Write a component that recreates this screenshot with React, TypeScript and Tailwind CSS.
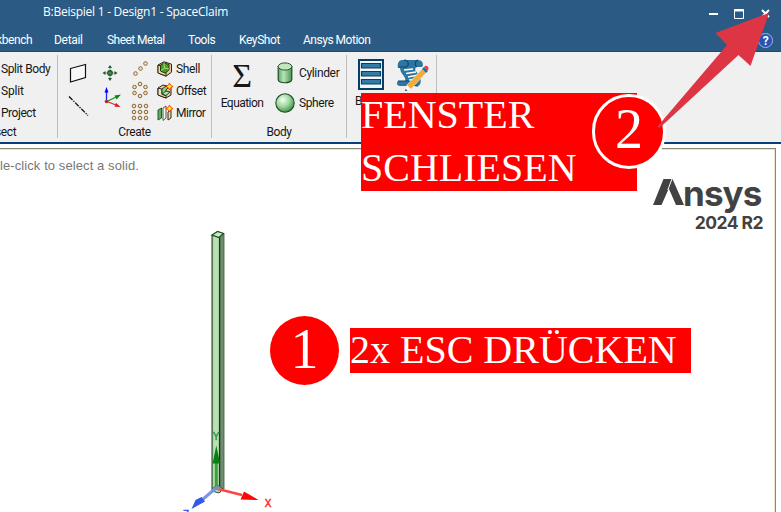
import type { ReactNode } from 'react';

function Tab({ children, className }: { children: ReactNode; className: string }) {
  return <div className={`shrink-0 whitespace-nowrap ${className}`}>{children}</div>;
}

function GroupLabel({ children }: { children: ReactNode }) {
  return <div className="h-[20px] text-center leading-[20px]">{children}</div>;
}

function PlaneIcon() {
  return (
    <svg width="22" height="22" viewBox="0 0 22 22">
      <path d="M3.5 6.5 18.5 2.5V15.5L3.5 20Z" fill="#f8f8f8" stroke="#111" strokeWidth="1.2" />
    </svg>
  );
}

function LineIcon() {
  return (
    <svg width="22" height="22" viewBox="0 0 22 22">
      <path d="M2 2.500 21 21.500" stroke="#111" strokeWidth="1.3" strokeDasharray="5 1.2 1.3 1.2" />
    </svg>
  );
}

function PointIcon() {
  return (
    <svg width="18" height="18" viewBox="0 0 18 18">
      <g fill="#1d5a2a">
        <path d="M9 1 11 4H7ZM9 17 7 14h4ZM1.500 9 4.500 7v4ZM16.500 9 13.500 7v4Z" />
        <path d="M4 8.500h10v1H4ZM8.500 4h1v10h-1Z" opacity=".55" />
        <circle cx="9" cy="9" r="2.900" />
      </g>
      <circle cx="9" cy="9" r="1.600" fill="#4d8a50" />
    </svg>
  );
}

function OriginIcon() {
  return (
    <svg width="20" height="22" viewBox="0 0 20 22">
      <path d="M4.500 14.500V4" stroke="#2222ff" strokeWidth="1.300" />
      <path d="M4.500 0 6.500 5.500h-4Z" fill="#00f" />
      <path d="M5 14.500 14 10" stroke="#169516" strokeWidth="1.300" />
      <path d="M19 7.500 14.500 12.500 12.500 8.500Z" fill="#078807" />
      <path d="m5 14.500 9 3.500" stroke="#d42a32" strokeWidth="1.300" />
      <path d="m18.500 20-6-.3 1.500-4Z" fill="#dc2028" />
      <circle cx="4.500" cy="14.500" r="1.800" fill="#bd2522" />
    </svg>
  );
}

function Rings({ points }: { points: number[][] }) {
  return (
    <svg width="18" height="18" viewBox="0 0 18 18">
      {points.map(([x, y]) => (
        <circle key={`${x}-${y}`} cx={x} cy={y} r="1.800" fill="#f8e8b3" stroke="#85633e" strokeWidth="1" />
      ))}
    </svg>
  );
}

function Spark() {
  return <path d="m12.500 0 1.200 2.300L16 3.500l-2.300 1.200L12.500 7l-1.200-2.300L9 3.500l2.300-1.200Z" fill="#ffed24" stroke="#f33a10" strokeWidth=".9" />;
}

function ShellIcon() {
  return (
    <svg width="16" height="16" viewBox="0 0 16 16">
      <path d="M1 4 7 .8 14.500 3.200v8L9 15.200 1 12Z" fill="#f2c899" stroke="#24291c" />
      <path d="m1 4 8 2.500v8.500L1 12Z" fill="#f0d9a6" stroke="#2c2a18" />
      <path d="m3.500 4 3.500-2L12 3.500v5.500l-4 3.200L3.500 10Z" fill="#4d9c22" stroke="#213b16" />
      <path d="m7 2 .5 5L4 9.500M7.500 7l4.500 1" stroke="#b1d980" fill="none" />
    </svg>
  );
}

function OffsetIcon() {
  return (
    <svg width="16" height="16" viewBox="0 0 16 16">
      <path d="m1 5 5-3 8 2v8l-5 3-8-3Z" fill="#f2ca99" stroke="#26251e" />
      <path d="m1 5 4 1.200v5.300l4 1V15l-8-3Z" fill="#f5dfb4" stroke="#26251e" />
      <path d="m5 6 4-3 3 1-3 3v3l-4 1Z" fill="#8fcb88" stroke="#1e4222" />
      <path d="m5 11 4-3 4 1-4 3.500Z" fill="#b7dfae" stroke="#1e4222" />
      <Spark />
    </svg>
  );
}

function MirrorIcon() {
  return (
    <svg width="16" height="16" viewBox="0 0 16 16">
      <path d="m1 5 3.500-2v10L1 15Z" fill="#5cae58" stroke="#25582b" />
      <path d="m6 3 3-2v12l-3 2.500Z" fill="#f7faf3" stroke="#55564e" />
      <path d="m11 7 3-2v8l-3 2Z" fill="#f7d99e" stroke="#302b1e" />
      <Spark />
    </svg>
  );
}

function CylinderIcon() {
  return (
    <svg width="16" height="22" viewBox="0 0 16 22">
      <defs>
        <linearGradient id="cylinder"><stop stopColor="#58ab64" /><stop offset=".4" stopColor="#b9e3b8" /><stop offset="1" stopColor="#479652" /></linearGradient>
      </defs>
      <path d="M1.200 4.500v13c0 4.300 13.600 4.300 13.600 0v-13Z" fill="url(#cylinder)" stroke="#244c29" strokeWidth="1.200" />
      <ellipse cx="8" cy="4.500" rx="6.800" ry="3.600" fill="#c1e7bd" stroke="#285630" />
    </svg>
  );
}

function SphereIcon() {
  return (
    <svg width="20" height="20" viewBox="0 0 20 20">
      <defs>
        <radialGradient id="sphere" cx=".38" cy=".33" r=".75"><stop stopColor="#f4fdf3" /><stop offset=".5" stopColor="#9bd79b" /><stop offset="1" stopColor="#33803c" /></radialGradient>
      </defs>
      <circle cx="10" cy="10" r="9.200" fill="url(#sphere)" stroke="#244f2a" strokeWidth="1.100" />
    </svg>
  );
}

function BlockIcon() {
  return (
    <svg width="26" height="31" viewBox="0 0 26 31">
      <path d="M1 1h24v29H1Z" fill="#f4f7f8" stroke="#043e69" strokeWidth="2" />
      {[4.5, 12.5, 20.5].map((y) => <path key={y} d={`M3.500 ${y}h19v4.500h-19Z`} fill="#317ba5" stroke="#063e67" strokeWidth="1.200" />)}
    </svg>
  );
}

function ScriptIcon() {
  return (
    <svg width="33" height="33" viewBox="0 0 33 33">
      <path d="M6 1h16c5 0 6 5 4 7h-6l-1 3 4 5c3 5 2 10-1 11H4c-3 0-4-3-2-5h7c2-4-5-7-5-13h-2c-1-5 1-8 4-8Z" fill="#2d76a2" />
      <path d="M8 1c5 0 6 7 1 7H3M22 1c-4 1-3 6-1 7M2 22h14c0 4 3 5 6 5" fill="none" stroke="#0a466e" strokeWidth="1.100" />
      <path d="m8 11 9-1M10 14.500 20 13M12 18l10-2M13 21l7-1" stroke="#fff" strokeWidth="1.400" />
      <path d="m26 10 4 4-15 16-6 2 2-6Z" fill="#f2ac37" stroke="#eee" strokeWidth=".6" />
      <path d="m26 10 2-2 4 4-2 2Z" fill="#0876b8" />
      <path d="m28 8 1-1c2-1 4 1 3.500 3L31 12Z" fill="#ed3f4c" />
      <path d="m11 26 4 4-6 2Z" fill="#fff" />
      <path d="m9 32 .8-2.100 1.500 1.500Z" fill="#222" />
    </svg>
  );
}

function Model() {
  return (
    <svg className="absolute left-[175px] top-[225px]" width="105" height="287" viewBox="175 225 105 287">
      <path d="m212 235 6-4 6 2.500V489l-5 4-7-2Z" fill="#b9e2b4" />
      <path d="m219 237 5-3.500V489l-5 4Z" fill="#708c71" />
      <path d="M212.200 235v256" stroke="#587c58" strokeWidth="1.800" />
      <path d="M219.600 237v256" stroke="#153b1b" strokeWidth="1.400" />
      <path d="M223.800 234v255" stroke="#58785a" strokeWidth="1.400" />
      <path d="m212 235 5.500-3.500 6 2-4.500 4Z" fill="#bdf0bd" stroke="#234b29" strokeWidth="1.300" />
      <path d="m212 489 5-4 6 4-4 4-7-2" fill="#b4dfb5" stroke="#315535" />
      <path d="M216.300 489v-27" stroke="#38a33a" strokeWidth="3" />
      <path d="m216.300 445.500 3.800 18h-7.500Z" fill="#087e13" />
      <path d="m218 489 24 6" stroke="#ff4540" strokeWidth="2.800" />
      <path d="m258.500 500-18-.5 3.500-8Z" fill="#ff0505" />
      <path d="m216 488-14 12" stroke="#7795e8" strokeWidth="3" />
      <path d="m191.500 509 4-9 6-3 3.500 4.500Z" fill="#315ae7" />
      <path d="m214 489 2.500-3.500 4 1.500-1 4Z" fill="#8291a9" />
      <g fontFamily="Liberation Sans, sans-serif" fontSize="10">
        <text x="212.800" y="439.500" fill="#289339" stroke="#289339" strokeWidth=".4">Y</text>
        <text x="264.800" y="507" fill="#ff3434" stroke="#ff3434" strokeWidth=".5">X</text>
        <text x="183" y="517.500" fill="#315bed" stroke="#315bed" strokeWidth=".5">Z</text>
      </g>
    </svg>
  );
}

export default function App() {
  return (
    <main className="relative flex h-[512px] w-[781px] flex-col overflow-hidden bg-white font-[Roboto,'Noto_Sans',sans-serif] text-[12px] tracking-[-0.400px] text-[#171717]">
      <header className="h-[52px] shrink-0 border-b border-[#164c7b] bg-[#2b5b84] text-white">
        <div className="flex h-[28px] pl-[43px]">
          <div className="w-[661px] pt-[3px] font-['Open_Sans',sans-serif] leading-[18px] tracking-[-0.250px]">B:Beispiel 1 - Design1 - SpaceClaim</div>
          <svg className="h-[28px] w-[70px]" viewBox="704 0 70 28" fill="none" stroke="white">
            <path d="M709 14h9" strokeWidth="2" />
            <path d="M734.500 9.500h9v9h-9Z" />
            <path d="M734 10.500h10" strokeWidth="2" />
            <path d="m762 10 7 7m0-7-7 7" strokeWidth="2" />
          </svg>
        </div>
        <nav className="flex h-[24px] leading-[24px]">
          <Tab className="-ml-[4px] w-[58px]">kbench</Tab>
          <Tab className="w-[53px] tracking-[-0.300px]">Detail</Tab>
          <Tab className="w-[81px] tracking-[-0.540px]">Sheet Metal</Tab>
          <Tab className="w-[51px]">Tools</Tab>
          <Tab className="w-[64px]">KeyShot</Tab>
          <Tab className="w-[455px] tracking-[-0.480px]">Ansys Motion</Tab>
          <div className="mt-[5px] flex h-[15px] w-[15px] items-center justify-center rounded-full border border-[#a5b4dc] bg-[#2454b7] text-[12px] font-bold">?</div>
        </nav>
      </header>

      <section className="flex h-[92px] shrink-0 border-b-2 border-[#083f76] bg-[#f0f0f0] pt-[3px]">
        <div className="flex h-[83px] w-[58px] flex-col justify-between border-r border-[#bdbdbd]">
          <div className="pl-px pt-[3px] leading-[22px]">
            <div className="whitespace-nowrap">Split Body</div>
            <div className="tracking-[-0.200px]">Split</div>
            <div className="tracking-[-0.450px]">Project</div>
          </div>
          <div className="-ml-[5px] h-[16px] leading-[16px] tracking-[-0.400px]">sect</div>
        </div>

        <div className="h-[83px] w-[154px] border-r border-[#bdbdbd]">
          <div className="flex h-[67px] pl-[9px]">
            <div className="flex w-[34px] flex-col gap-[10px] pt-[7px]"><PlaneIcon /><LineIcon /></div>
            <div className="flex w-[30px] flex-col gap-[5px] pt-[9px]"><PointIcon /><span className="ml-px"><OriginIcon /></span></div>
            <div className="flex w-[26px] flex-col gap-[4px] pt-[4px]">
              <Rings points={[[4.5, 14.5], [9.5, 9.5], [14.5, 4.5]]} />
              <Rings points={[[9, 3], [3.5, 6], [14.5, 6], [3.5, 12], [14.5, 12], [9, 15]]} />
              <Rings points={[[3, 3], [9, 3], [15, 3], [3, 9], [9, 9], [15, 9], [3, 15], [9, 15], [15, 15]]} />
            </div>
            <div className="pt-[3px]">
              <div className="flex h-[22px] items-center gap-[3px]"><ShellIcon /><span>Shell</span></div>
              <div className="flex h-[22px] items-center gap-[3px]"><OffsetIcon /><span className="tracking-[-0.500px]">Offset</span></div>
              <div className="flex h-[22px] items-center gap-[3px]"><MirrorIcon /><span className="tracking-[-0.500px]">Mirror</span></div>
            </div>
          </div>
          <GroupLabel>Create</GroupLabel>
        </div>

        <div className="h-[83px] w-[135px] border-r border-[#bdbdbd]">
          <div className="flex h-[67px]">
            <div className="flex w-[60px] flex-col items-center pt-[4px]">
              <div className="font-['Liberation_Serif',serif] text-[34px] leading-[34px]">Σ</div>
              <div className="leading-[20px] tracking-[-0.550px]">Equation</div>
            </div>
            <div className="pl-[3px] pt-[3px]">
              <div className="flex h-[30px] items-center gap-[6px]"><span className="ml-[2px]"><CylinderIcon /></span><span className="tracking-[-0.350px]">Cylinder</span></div>
              <div className="flex h-[29px] items-center gap-[4px]"><SphereIcon /><span className="tracking-[-0.400px]">Sphere</span></div>
            </div>
          </div>
          <GroupLabel>Body</GroupLabel>
        </div>

        <div className="flex h-[83px] w-[90px] border-r border-[#bdbdbd] pl-[11px] pt-[4px]">
          <div className="w-[38px]"><BlockIcon /><div className="-ml-[3px] leading-[22px]">B</div></div>
          <ScriptIcon />
        </div>
      </section>

      <section className="relative mr-[5px] mt-[4px] flex-1 border-r border-t border-[#8c8872] bg-white shadow-[inset_-1px_1px_0_#e8e4cf]">
        <p className="pt-[8px] font-['Liberation_Sans',sans-serif] text-[13px] leading-[18px] tracking-[0.090px] text-[#777]">le-click to select a solid.</p>
      </section>
      <Model />
      <div className="absolute left-[653px] top-[174px] h-[62px] w-[112px] text-[#424242]">
        <svg className="absolute left-0 top-[4px]" width="32" height="28" viewBox="0 0 32 28">
          <path d="M10.500 1H19.500L31 27H23L15.800 10.500 8.500 27H0Z" fill="#424242" />
          <path d="m19.300 0-4.500 12" stroke="white" strokeWidth="1" />
        </svg>
        <div className="absolute left-[30px] top-px font-[Inter,sans-serif] text-[35px] font-bold leading-[36px] tracking-[-0.900px]">nsys</div>
        <div className="absolute right-[2px] top-[39px] whitespace-nowrap font-[Inter,sans-serif] text-[17.500px] font-bold leading-[20px] tracking-[-0.550px]">2024 R2</div>
      </div>

      <div className="absolute left-[361px] top-[93px] h-[98px] w-[276px] bg-[#f00] font-['Liberation_Serif',serif] text-[40px] leading-[53px] tracking-normal text-white">
        <div className="-mt-[5px]">FENSTER</div>
        <div>SCHLIESEN</div>
      </div>
      <div className="absolute left-[592px] top-[94px] flex h-[75px] w-[74px] items-center justify-center rounded-full border-[3px] border-white bg-[#f00] pb-[4px] font-['Liberation_Serif',serif] text-[56px] leading-[65px] tracking-normal text-white">2</div>
      <svg className="absolute left-[655px] top-[10px]" width="120" height="125" viewBox="655 10 120 125">
        <path d="m769 13-18.500 53-12-11-79 73-2-1.500L727 45l-11.500-12Z" fill="#de3545" />
      </svg>
      <div className="absolute left-[270px] top-[316px] flex h-[69px] w-[69px] items-center justify-center rounded-full bg-[#f00] pb-[4px] font-['Liberation_Serif',serif] text-[56px] leading-[64px] tracking-normal text-white">1</div>
      <div className="absolute left-[350px] top-[328px] h-[45px] w-[341px] whitespace-nowrap bg-[#f00] font-['Liberation_Serif',serif] text-[40px] leading-[44px] tracking-normal text-white">2x ESC DRÜCKEN</div>
    </main>
  );
}
